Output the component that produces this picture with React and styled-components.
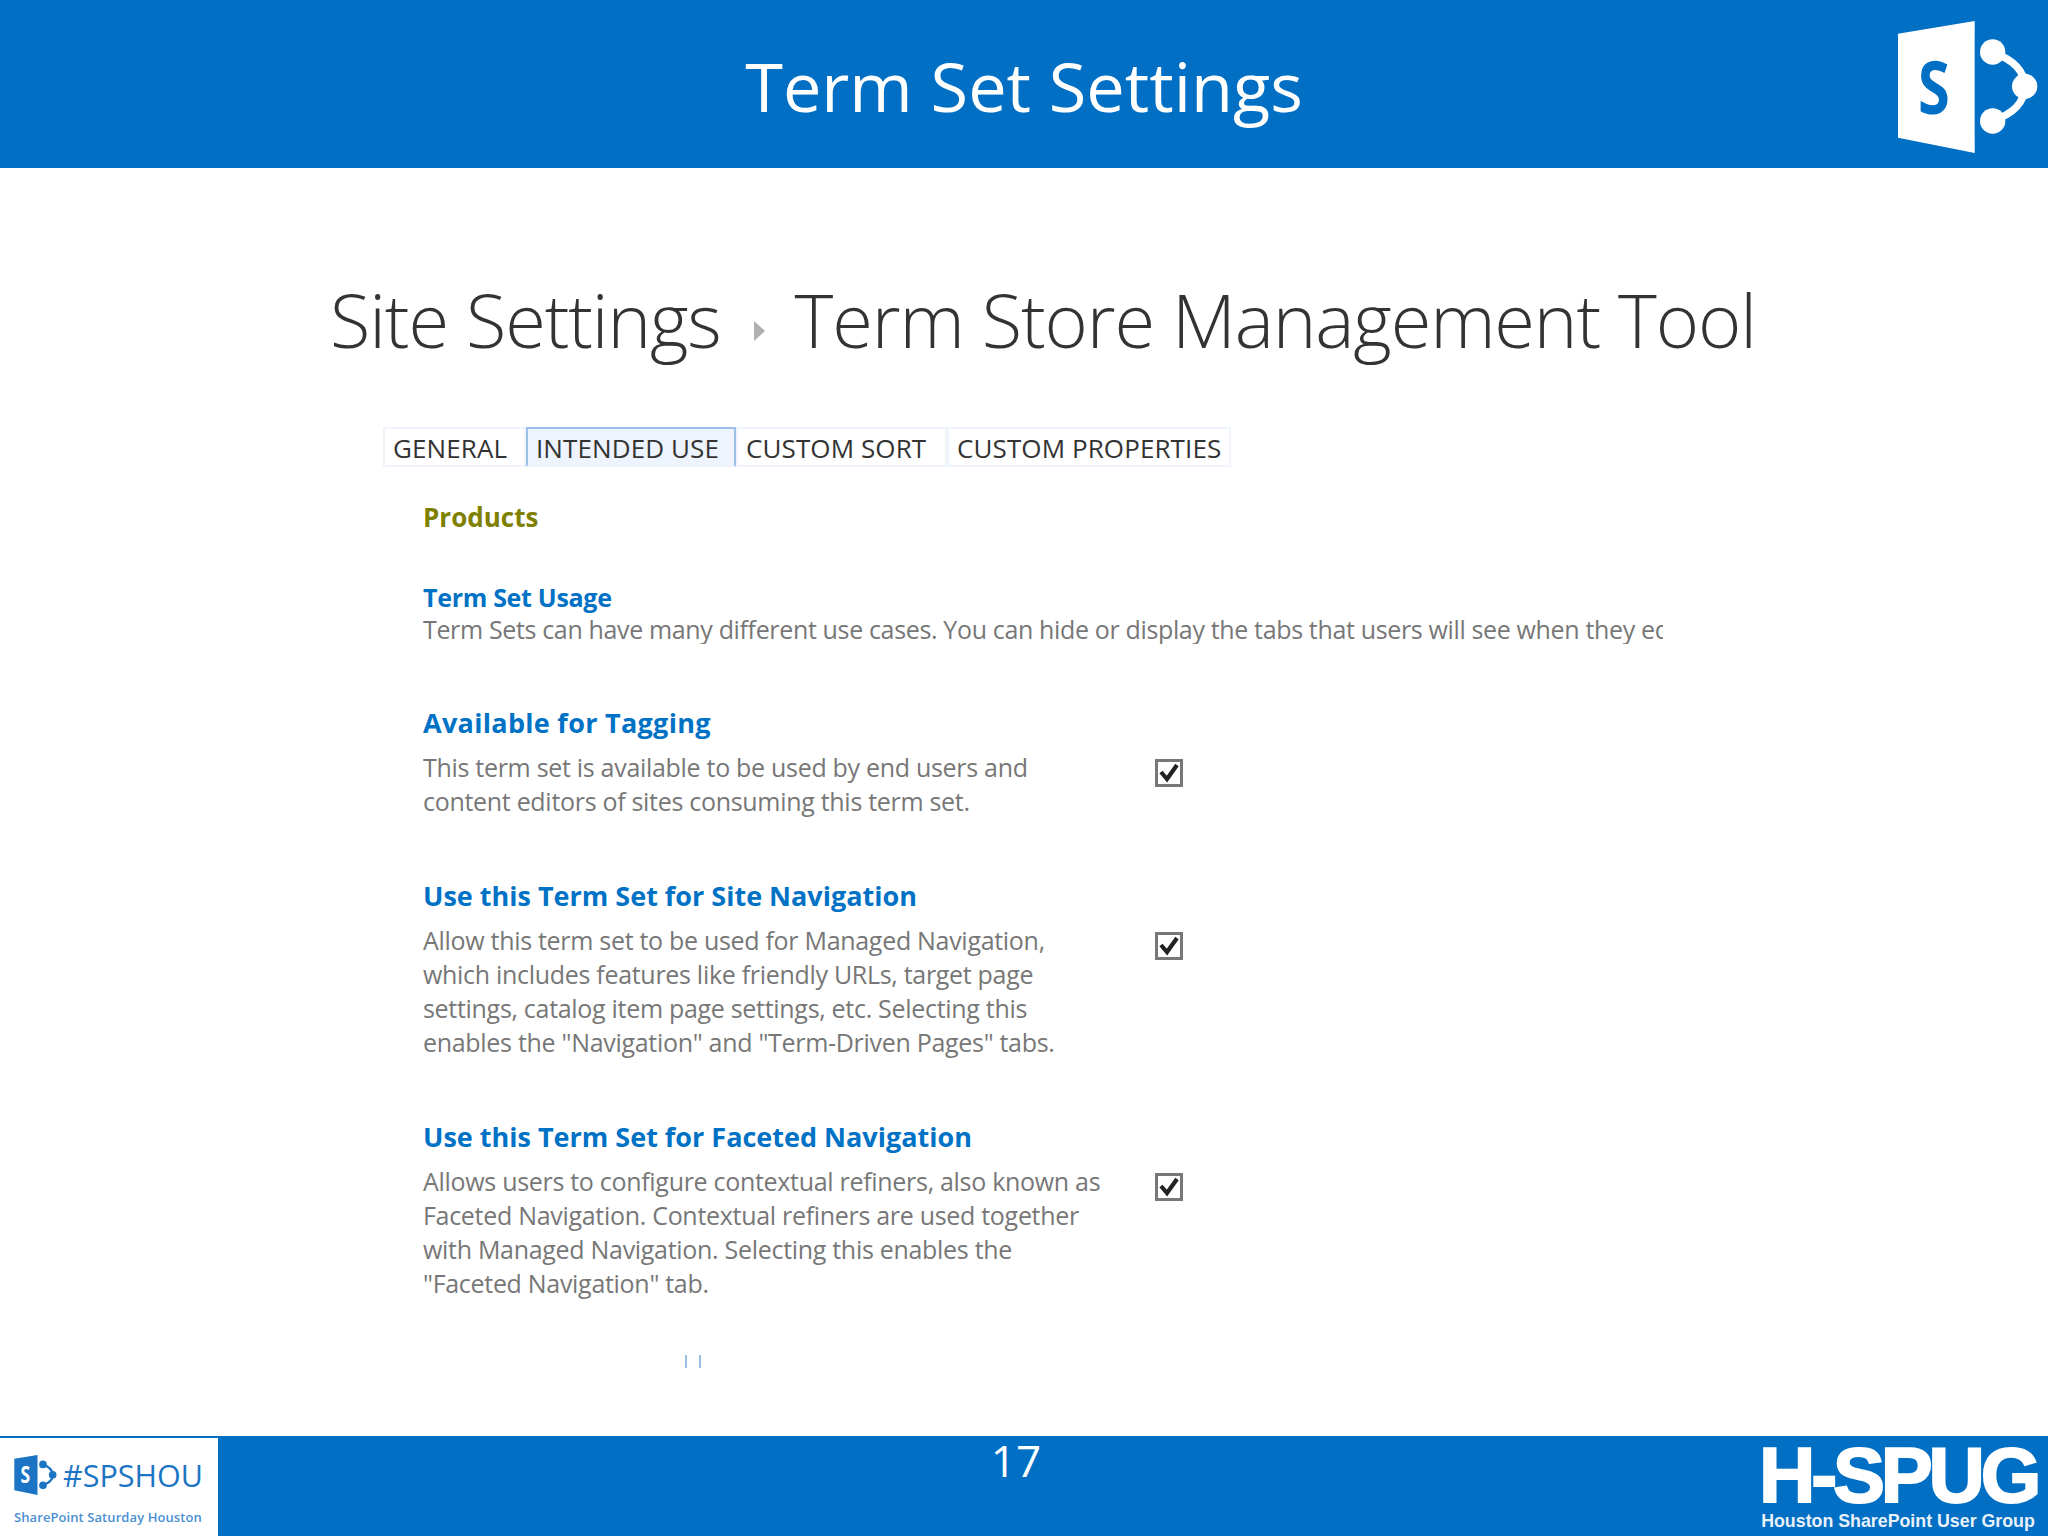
import React from 'react'
import styled, { createGlobalStyle } from 'styled-components'

const GlobalStyle = createGlobalStyle`
  html, body { margin: 0; padding: 0; background: #fff; }
  body { font-family: "Open Sans", "Liberation Sans", sans-serif; }
`
const Page = styled.div`
  width: 2048px;
  height: 1536px;
  overflow: hidden;
  display: flex;
  flex-direction: column;
`
const Header = styled.header`
  height: 168px;
  background: #006fc4;
  display: grid;
  grid-template-columns: 1fr auto 1fr;
  align-items: center;
  padding-right: 10px;
`
const Title = styled.h1`
  grid-column: 2;
  margin: 0 0 0 10px;
  color: #fff;
  font-size: 68.5px;
  font-weight: 400;
  line-height: 1;
  position: relative;
  top: 2px;
`
const HeaderLogo = styled.svg`
  grid-column: 3;
  justify-self: end;
  width: 140px;
  height: 132px;
  margin-top: 6px;
`
const Main = styled.main`
  flex: 1;
  padding: 102px 0 0 330px;
  display: flex;
  flex-direction: column;
`
const Breadcrumb = styled.div`
  display: flex;
  align-items: center;
  height: 100px;
  font-size: 74px;
  font-weight: 300;
  letter-spacing: -1.15px;
  color: #333;
  line-height: 1;
  white-space: nowrap;
`
const Arrow = styled.span`
  width: 0;
  height: 0;
  margin: 21px 30px 0 33px;
  border-left: 11px solid #b0b0b0;
  border-top: 10px solid transparent;
  border-bottom: 10px solid transparent;
`
const TabBar = styled.nav`
  display: flex;
  margin: 57px 0 0 53px;
  width: 848px;
`
const Tab = styled.div`
  height: 40px;
  width: ${p => p.$w}px;
  box-sizing: border-box;
  display: flex;
  align-items: center;
  padding: 2px 0 0 8px;
  font-size: 26px;
  letter-spacing: 0.1px;
  color: #333;
  white-space: nowrap;
  border: 2px solid ${p => (p.$active ? '#9dc0e8' : '#eff4fb')};
  border-bottom-color: ${p => (p.$active ? '#eef4fd' : '#eff4fb')};
  background: ${p => (p.$active ? '#eef4fd' : '#fff')};
`
const Content = styled.div`
  margin-left: 93px;
  display: flex;
  flex-direction: column;
`
const ListName = styled.div`
  margin-top: 33px;
  height: 34px;
  line-height: 34px;
  font-size: 26px;
  font-weight: 700;
  color: #808000;
`
const UsageTitle = styled.div`
  margin-top: 46px;
  height: 34px;
  line-height: 34px;
  font-size: 25px;
  font-weight: 700;
  letter-spacing: -0.3px;
  color: #0072c6;
`
const UsageText = styled.div`
  width: 1240px;
  height: 30px;
  line-height: 30px;
  overflow: hidden;
  white-space: nowrap;
  font-size: 25px;
  letter-spacing: -0.35px;
  color: #777;
`
const Section = styled.section`
  margin-top: ${p => p.$top}px;
`
const SectionTitle = styled.div`
  height: 34px;
  line-height: 34px;
  margin-bottom: 10px;
  font-size: 27px;
  font-weight: 700;
  letter-spacing: ${p => p.$spacing || 0}px;
  color: #0072c6;
`
const SectionRow = styled.div`
  display: grid;
  grid-template-columns: 732px 28px;
  align-items: start;
`
const Line = styled.div`
  height: 34px;
  line-height: 34px;
  font-size: 25px;
  letter-spacing: -0.3px;
  color: #777;
  white-space: nowrap;
`
const Checkbox = styled.span`
  width: 28px;
  height: 28px;
  box-sizing: border-box;
  margin-top: 9px;
  border: 3px solid #777;
  display: flex;
  align-items: center;
  justify-content: center;
`
const Ticks = styled.div`
  display: flex;
  gap: 12px;
  margin: 55px 0 0 262px;
`
const Tick = styled.span`
  width: 2px;
  height: 13px;
  background: #9cc0e4;
`
const Footer = styled.footer`
  height: 100px;
  background: #006fc4;
  display: grid;
  grid-template-columns: 1fr auto 1fr;
`
const SpsBox = styled.div`
  justify-self: start;
  width: 218px;
  height: 98px;
  margin-top: 2px;
  box-sizing: border-box;
  padding: 16px 0 0 14px;
  background: #fff;
  color: #1c75c4;
`
const SpsTop = styled.div`
  display: flex;
  align-items: center;
  gap: 6px;
  height: 42px;
`
const SpsTag = styled.span`
  font-size: 30.5px;
  line-height: 1;
`
const SpsSub = styled.div`
  margin-top: 13px;
  font-size: 13px;
  font-weight: 600;
  letter-spacing: 0.08px;
  line-height: 16px;
  color: #4a90d2;
  white-space: nowrap;
`
const PageNumber = styled.div`
  color: #fff;
  font-size: 44px;
  line-height: 48px;
  margin: 0 16px 0 0;
`
const HspugBox = styled.div`
  grid-column: 3;
  justify-self: end;
  width: 278px;
  margin: 7px 11px 0 0;
  color: #fff;
  font-family: "Liberation Sans", Arial, sans-serif;
  font-weight: 700;
  text-align: center;
`
const HspugMark = styled.div`
  font-size: 78px;
  line-height: 64px;
  -webkit-text-stroke: 2px #fff;
  letter-spacing: -4.2px;
  white-space: nowrap;
`
const HspugSub = styled.div`
  font-size: 17.8px;
  line-height: 22px;
  margin-top: 3px;
  color: #e8f1fa;
  white-space: nowrap;
`

function SpLogo({ as, fill = '#fff', ink = '#006fc4', width, height }) {
  const Svg = as || 'svg'
  return (
    <Svg viewBox="150 62 420 396" width={width} height={height}>
      <polygon points="150,100 380,62 380,458 150,412" fill={fill} />
      <text transform="translate(258 340) scale(0.78 1)" textAnchor="middle" fontFamily="Open Sans, sans-serif" fontWeight="700" fontSize="222" fill={ink}>S</text>
      <path d="M432 155 Q530 190 530 258 Q530 330 432 362" fill="none" stroke={fill} strokeWidth="22" />
      <circle cx="434" cy="155" r="38" fill={fill} />
      <circle cx="530" cy="258" r="38" fill={fill} />
      <circle cx="434" cy="362" r="38" fill={fill} />
    </Svg>
  )
}

const CheckMark = () => (
  <svg viewBox="0 0 22 22" width="22" height="22">
    <path d="M3 10 L9 17 L19 3" fill="none" stroke="#222" strokeWidth="4.2" />
  </svg>
)

const tabs = [
  { label: 'GENERAL', w: 143 },
  { label: 'INTENDED USE', w: 210, active: true },
  { label: 'CUSTOM SORT', w: 211 },
  { label: 'CUSTOM PROPERTIES', w: 284 },
]

const sections = [
  {
    title: 'Available for Tagging',
    top: 62,
    spacing: 0.3,
    lines: [
      'This term set is available to be used by end users and',
      'content editors of sites consuming this term set.',
    ],
  },
  {
    title: 'Use this Term Set for Site Navigation',
    top: 61,
    lines: [
      'Allow this term set to be used for Managed Navigation,',
      'which includes features like friendly URLs, target page',
      'settings, catalog item page settings, etc. Selecting this',
      'enables the "Navigation" and "Term-Driven Pages" tabs.',
    ],
  },
  {
    title: 'Use this Term Set for Faceted Navigation',
    top: 61,
    lines: [
      'Allows users to configure contextual refiners, also known as',
      'Faceted Navigation. Contextual refiners are used together',
      'with Managed Navigation. Selecting this enables the',
      '"Faceted Navigation" tab.',
    ],
  },
]

export default function App() {
  return (
    <Page>
      <GlobalStyle />
      <Header>
        <Title>Term Set Settings</Title>
        <SpLogo as={HeaderLogo} />
      </Header>
      <Main>
        <Breadcrumb>
          Site Settings<Arrow />Term Store Management Tool
        </Breadcrumb>
        <TabBar>
          {tabs.map(t => (
            <Tab key={t.label} $w={t.w} $active={t.active}>{t.label}</Tab>
          ))}
        </TabBar>
        <Content>
          <ListName>Products</ListName>
          <UsageTitle>Term Set Usage</UsageTitle>
          <UsageText>Term Sets can have many different use cases. You can hide or display the tabs that users will see when they edit this term set.</UsageText>
          {sections.map(s => (
            <Section key={s.title} $top={s.top}>
              <SectionTitle $spacing={s.spacing}>{s.title}</SectionTitle>
              <SectionRow>
                <div>
                  {s.lines.map(l => <Line key={l}>{l}</Line>)}
                </div>
                <Checkbox><CheckMark /></Checkbox>
              </SectionRow>
            </Section>
          ))}
          <Ticks><Tick /><Tick /></Ticks>
        </Content>
      </Main>
      <Footer>
        <SpsBox>
          <SpsTop>
            <SpLogo fill="#1c75c4" ink="#fff" width={43} height={40} />
            <SpsTag>#SPSHOU</SpsTag>
          </SpsTop>
          <SpsSub>SharePoint Saturday Houston</SpsSub>
        </SpsBox>
        <PageNumber>17</PageNumber>
        <HspugBox>
          <HspugMark>H-SPUG</HspugMark>
          <HspugSub>Houston SharePoint User Group</HspugSub>
        </HspugBox>
      </Footer>
    </Page>
  )
}
